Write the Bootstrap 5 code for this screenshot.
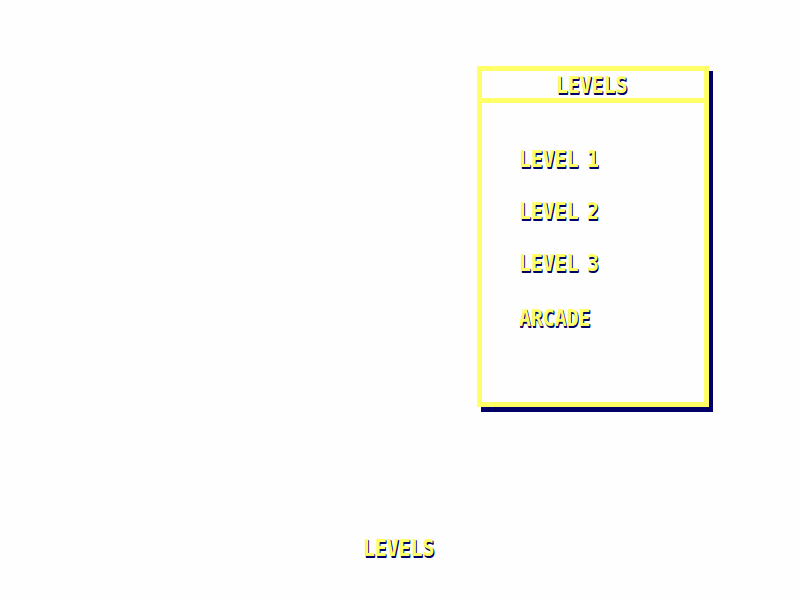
<!DOCTYPE html>
<html lang="en">
<head>
<meta charset="utf-8">
<meta name="viewport" content="width=device-width, initial-scale=1">
<title>Levels</title>
<link href="https://cdn.jsdelivr.net/npm/bootstrap@5.3.0/dist/css/bootstrap.min.css" rel="stylesheet">
<style>
body{width:800px;height:600px;background:#fefefe;overflow:hidden;padding-top:66px}
.levels-panel{width:232px;height:341px;margin-left:477px;border:5px solid #ffff66;border-radius:0;background:#fefefe;box-shadow:4px 5px 0 #000066}
.panel-title{height:32px;border-bottom:5px solid #ffff66;padding-left:74px;padding-top:2px}
.pixel-text{display:block;width:max-content;font:700 23px/24px "DejaVu Sans Mono","Liberation Mono",monospace;color:#ffff66;text-shadow:1px 1px 0 #000066,1px 2px 0 #000066;text-decoration:none;white-space:pre;word-spacing:-4px;transform:scaleX(.86);transform-origin:0 0;text-transform:uppercase}
.level-list{padding:44px 0 0 37px}
.level-list li{height:52px}
.level-list li:nth-child(3){height:55px}
.page-caption{margin:129px 0 0 363px}
</style>
<script src="https://cdn.jsdelivr.net/npm/bootstrap@5.3.0/dist/js/bootstrap.bundle.min.js"></script>
</head>
<body>
<main class="card levels-panel">
<header class="panel-title"><h1 class="pixel-text mb-0">Levels</h1></header>
<ul class="list-unstyled level-list mb-0">
<li><a class="pixel-text" href="#">Level 1</a></li>
<li><a class="pixel-text" href="#">Level 2</a></li>
<li><a class="pixel-text" href="#">Level 3</a></li>
<li><a class="pixel-text" href="#">Arcade</a></li>
</ul>
</main>
<footer class="page-caption"><span class="pixel-text">Levels</span></footer>
</body>
</html>
